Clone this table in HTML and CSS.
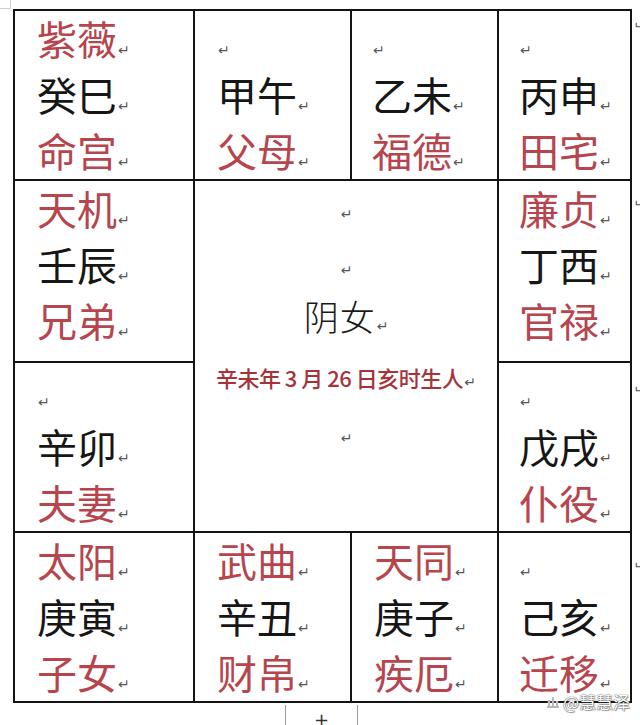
FILE: index.html
```html
<!DOCTYPE html>
<html lang="zh-CN">
<head>
<meta charset="utf-8">
<title>命盘</title>
<link rel="stylesheet" href="styles.css">
</head>
<body>
<div class="page">
  <div class="corner"></div>
  <div class="board">
    <div class="cell">
      <div class="ln"><span class="t red">紫薇</span><span class="rm">↵</span></div>
      <div class="ln"><span class="t">癸巳</span><span class="rm">↵</span></div>
      <div class="ln"><span class="t red">命宫</span><span class="rm">↵</span></div>
    </div>
    <div class="cell">
      <div class="ln"><span class="rm">↵</span></div>
      <div class="ln"><span class="t">甲午</span><span class="rm">↵</span></div>
      <div class="ln"><span class="t red">父母</span><span class="rm">↵</span></div>
    </div>
    <div class="cell">
      <div class="ln"><span class="rm">↵</span></div>
      <div class="ln"><span class="t">乙未</span><span class="rm">↵</span></div>
      <div class="ln"><span class="t red">福德</span><span class="rm">↵</span></div>
    </div>
    <div class="cell">
      <div class="ln"><span class="rm">↵</span></div>
      <div class="ln"><span class="t">丙申</span><span class="rm">↵</span></div>
      <div class="ln"><span class="t red">田宅</span><span class="rm">↵</span></div>
    </div>

    <div class="cell">
      <div class="ln"><span class="t red">天机</span><span class="rm">↵</span></div>
      <div class="ln"><span class="t">壬辰</span><span class="rm">↵</span></div>
      <div class="ln"><span class="t red">兄弟</span><span class="rm">↵</span></div>
    </div>
    <div class="cell center">
      <div class="ln"><span class="rm">↵</span></div>
      <div class="ln"><span class="rm">↵</span></div>
      <div class="ln"><span class="big">阴女</span><span class="rm">↵</span></div>
      <div class="ln"><span class="birth">辛未年 3 月 26 日亥时生人</span><span class="rm">↵</span></div>
      <div class="ln"><span class="rm">↵</span></div>
    </div>
    <div class="cell">
      <div class="ln"><span class="t red">廉贞</span><span class="rm">↵</span></div>
      <div class="ln"><span class="t">丁西</span><span class="rm">↵</span></div>
      <div class="ln"><span class="t red">官禄</span><span class="rm">↵</span></div>
    </div>

    <div class="cell">
      <div class="ln"><span class="rm">↵</span></div>
      <div class="ln"><span class="t">辛卯</span><span class="rm">↵</span></div>
      <div class="ln"><span class="t red">夫妻</span><span class="rm">↵</span></div>
    </div>
    <div class="cell">
      <div class="ln"><span class="rm">↵</span></div>
      <div class="ln"><span class="t">戊戌</span><span class="rm">↵</span></div>
      <div class="ln"><span class="t red">仆役</span><span class="rm">↵</span></div>
    </div>

    <div class="cell">
      <div class="ln"><span class="t red">太阳</span><span class="rm">↵</span></div>
      <div class="ln"><span class="t">庚寅</span><span class="rm">↵</span></div>
      <div class="ln"><span class="t red">子女</span><span class="rm">↵</span></div>
    </div>
    <div class="cell">
      <div class="ln"><span class="t red">武曲</span><span class="rm">↵</span></div>
      <div class="ln"><span class="t">辛丑</span><span class="rm">↵</span></div>
      <div class="ln"><span class="t red">财帛</span><span class="rm">↵</span></div>
    </div>
    <div class="cell">
      <div class="ln"><span class="t red">天同</span><span class="rm">↵</span></div>
      <div class="ln"><span class="t">庚子</span><span class="rm">↵</span></div>
      <div class="ln"><span class="t red">疾厄</span><span class="rm">↵</span></div>
    </div>
    <div class="cell">
      <div class="ln"><span class="rm">↵</span></div>
      <div class="ln"><span class="t">己亥</span><span class="rm">↵</span></div>
      <div class="ln"><span class="t red">迁移</span><span class="rm">↵</span></div>
    </div>
  </div>

  <div class="edge-marks">
    <span class="em m1">↵</span>
    <span class="em m2">↵</span>
    <span class="em m3">↵</span>
    <span class="em m4">↵</span>
  </div>

  <div class="tab"><span class="plus">+</span></div>

  <div class="watermark">
    <svg class="wm-icon" width="14" height="14" viewBox="0 0 14 14" aria-hidden="true">
      <path d="M3 11 L3 5 M7 11 L7 2 M11 11 L11 6 M1 12 H13" stroke="#fff" stroke-width="2.4" fill="none"/>
      <path d="M3 11 L3 5 M7 11 L7 2 M11 11 L11 6 M1 12 H13" stroke="#777" stroke-width="1" fill="none"/>
    </svg>
    <span>@慧慧泽</span>
  </div>
</div>
</body>
</html>
```
FILE: styles.css
```css
html, body {
  margin: 0;
  padding: 0;
  background: #ffffff;
}

body {
  width: 640px;
  height: 725px;
  overflow: hidden;
  font-family: "Noto Sans CJK SC", "Noto Sans", sans-serif;
}

.page {
  position: relative;
  width: 640px;
  height: 725px;
  padding-top: 9px;
  box-sizing: border-box;
}

.corner {
  position: absolute;
  left: 0;
  top: 0;
  width: 10px;
  height: 8px;
  border-right: 1px solid #cfcfcf;
  border-bottom: 1px solid #cfcfcf;
}

.board {
  display: grid;
  grid-template-columns: 178px 155px 145px 131px;
  grid-template-rows: 168px 180px 168px 168px;
  gap: 2px;
  padding: 2px;
  background: #141414;
  margin-left: 13px;
  width: max-content;
}

.cell {
  background: #ffffff;
  padding-left: 22px;
  font-size: 36px;
  line-height: 56px;
}

.cell:nth-child(3),
.cell:nth-child(4),
.cell:nth-child(7),
.cell:nth-child(9),
.cell:nth-child(13) {
  padding-left: 20px;
}

.ln {
  height: 56px;
  white-space: nowrap;
}

.t {
  font-size: 40px;
  line-height: 1;
  color: #161616;
  font-weight: 400;
}

.t.red {
  color: #b6454d;
}

.rm {
  font-family: "DejaVu Sans", sans-serif;
  font-size: 14px;
  line-height: 1;
  color: #555555;
  margin-left: 1px;
}

.center {
  grid-column: 2 / 4;
  grid-row: 2 / 4;
  padding-left: 0;
  text-align: center;
  font-size: 22px;
}

.big {
  font-size: 35px;
  line-height: 1;
  font-weight: 300;
  color: #1a1a1a;
  letter-spacing: 1px;
}

.birth {
  font-size: 22px;
  line-height: 1;
  font-weight: 500;
  color: #a8323a;
  letter-spacing: -0.5px;
}

.edge-marks {
  position: absolute;
  right: 0;
  top: 0;
  width: 8px;
  height: 725px;
  overflow: hidden;
}

.em {
  position: absolute;
  left: 1px;
  font-family: "DejaVu Sans", sans-serif;
  font-size: 13px;
  line-height: 1;
  color: #555555;
  transform: scaleX(-1);
}

.m1 { top: 20px; }
.m2 { top: 198px; }
.m3 { top: 384px; }
.m4 { top: 560px; }

.tab {
  width: 71px;
  height: 22px;
  margin-left: 285px;
  margin-top: 2px;
  border-left: 1px solid #9a9a9a;
  border-right: 1px solid #9a9a9a;
  text-align: center;
  font-family: "DejaVu Sans", sans-serif;
  font-size: 18px;
  line-height: 30px;
  color: #333;
  overflow: hidden;
}

.watermark {
  position: absolute;
  left: 546px;
  top: 692px;
  display: flex;
  align-items: center;
  gap: 3px;
  font-size: 17px;
  line-height: 20px;
  color: #ffffff;
  text-shadow: 0 0 1px #555, 0 0 1px #555, 1px 1px 1px rgba(0,0,0,0.35);
}

.wm-icon {
  display: block;
}
```
